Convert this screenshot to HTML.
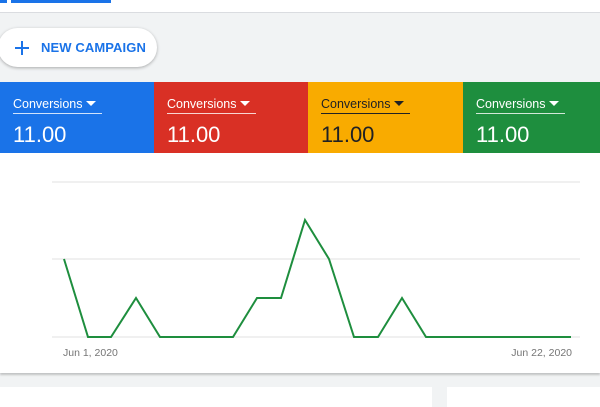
<!DOCTYPE html>
<html><head><style>
body{margin:0;width:600px;height:400px;overflow:hidden;background:#f1f3f4;font-family:"Liberation Sans",Arial,sans-serif;position:relative}
.top{position:absolute;left:0;top:0;width:600px;height:12px;background:#fff;border-bottom:1px solid #dadce0}
.bar{position:absolute;left:11px;top:0;width:100px;height:3px;background:#1a73e8}
.bar0{position:absolute;left:0;top:0;width:7px;height:3px;background:#1a73e8}
.btn{position:absolute;left:-2px;top:28px;width:159px;height:39px;background:#fff;border-radius:20px;box-shadow:0 1px 3px rgba(0,0,0,.3)}
.btn span{position:absolute;left:43px;top:12px;font-size:13px;font-weight:bold;color:#1a73e8;letter-spacing:.1px}
.btn svg{position:absolute;left:17px;top:13px}
.card{position:absolute;top:82px;height:71px;color:#fff}
.card .l{position:absolute;left:13px;top:15px;font-size:12.5px;border-bottom:1px solid rgba(255,255,255,.8);padding-bottom:2px;padding-right:6px}
.card .l b{display:inline-block;width:0;height:0;border-left:5px solid transparent;border-right:5px solid transparent;border-top:5px solid currentColor;margin-left:4px;vertical-align:2px}
.card .v{position:absolute;left:13px;top:40px;font-size:22px}
.chart{position:absolute;left:0;top:153px;width:600px;height:220px;background:#fff;box-shadow:0 2px 2px rgba(0,0,0,.2)}
.p{position:absolute;top:387px;height:20px;background:#fff}
</style></head><body>
<div class="top"><div class="bar0"></div><div class="bar"></div></div>
<div class="btn"><svg width="14" height="14"><path d="M7 0V14M0 7H14" stroke="#1a73e8" stroke-width="2"/></svg><span>NEW CAMPAIGN</span></div>
<div class="card" style="left:0;width:154px;background:#1a73e8"><div class="l">Conversions<b></b></div><div class="v">11.00</div></div>
<div class="card" style="left:154px;width:154px;background:#d93025"><div class="l">Conversions<b></b></div><div class="v">11.00</div></div>
<div class="card" style="left:308px;width:155px;background:#f9ab00;color:#202124"><div class="l" style="border-color:#202124">Conversions<b></b></div><div class="v">11.00</div></div>
<div class="card" style="left:463px;width:137px;background:#1e8e3e"><div class="l">Conversions<b></b></div><div class="v">11.00</div></div>
<div class="chart">
<svg width="600" height="220" style="position:absolute;left:0;top:0">
<g stroke="#e0e0e0" stroke-width="1"><line x1="52" y1="29" x2="580" y2="29"/><line x1="52" y1="106" x2="580" y2="106"/><line x1="52" y1="184" x2="580" y2="184"/></g>
<polyline fill="none" stroke="#1e8e3e" stroke-width="2" points="64,106 88,184 111,184 136,145 160,184 233,184 257,145 281,145 305,67 329,106 354,184 378,184 402,145 426,184 571,184"/>
<text x="63" y="203" font-size="10.5" fill="#757575" font-family="Liberation Sans">Jun 1, 2020</text>
<text x="572" y="203" font-size="10.5" fill="#757575" text-anchor="end" font-family="Liberation Sans">Jun 22, 2020</text>
</svg></div>
<div class="p" style="left:0;width:432px"></div>
<div class="p" style="left:447px;width:153px"></div>
</body></html>
